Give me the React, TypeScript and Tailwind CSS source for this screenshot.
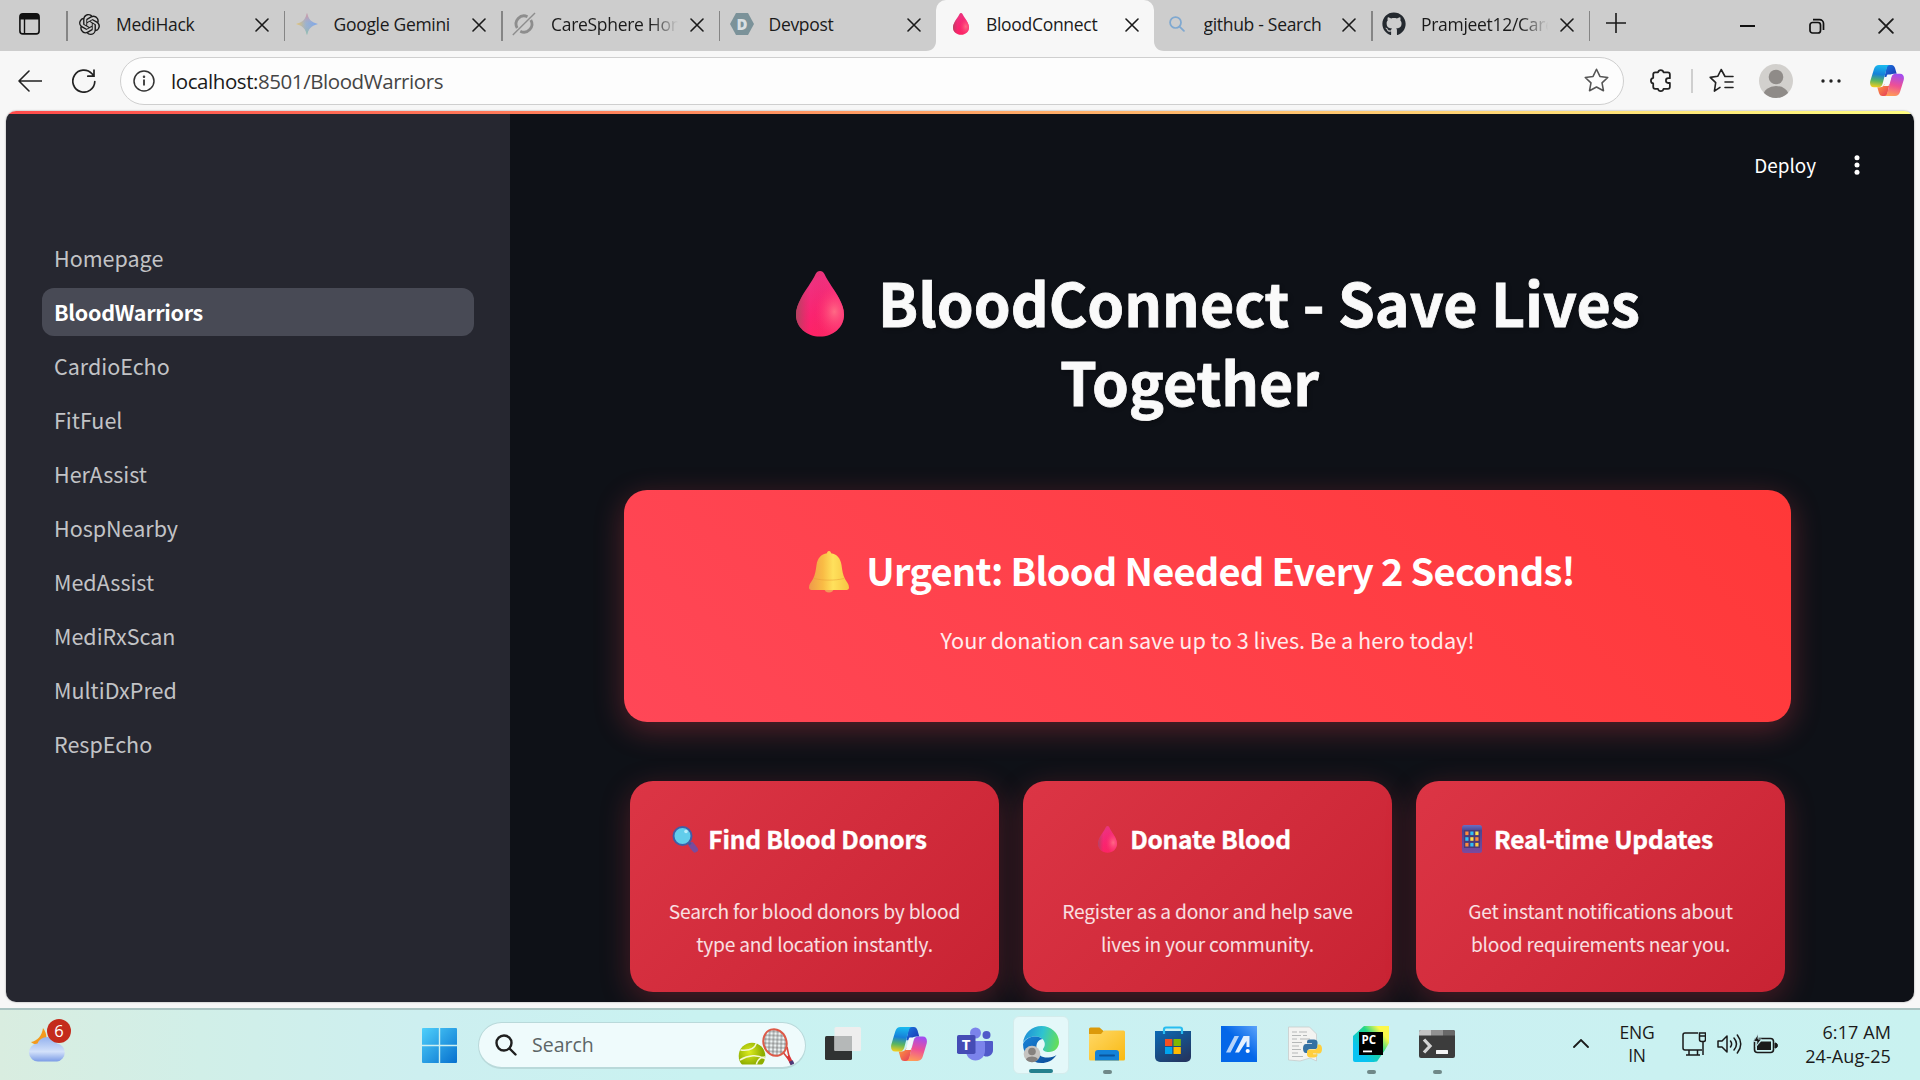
import React from 'react';
import { FaGithub } from 'react-icons/fa';
import { SiOpenai } from 'react-icons/si';

const UI_FONT = "font-['Open_Sans','Noto_Sans',sans-serif]";
const APP_FONT = "font-['Noto_Sans_CJK_SC','Noto_Sans',sans-serif]";

const DropIcon = ({ className = '' }: { className?: string }) => (
  <svg viewBox="0 0 48 68" className={className} preserveAspectRatio="none">
    <defs>
      <linearGradient id="dropBase" x1="0" y1="0" x2="0.6" y2="1">
        <stop offset="0" stopColor="#c7475f" />
        <stop offset="0.3" stopColor="#f0307f" />
        <stop offset="0.65" stopColor="#fb2370" />
        <stop offset="1" stopColor="#ff2260" />
      </linearGradient>
      <radialGradient id="dropGlow" cx="0.8" cy="0.62" r="0.4">
        <stop offset="0" stopColor="#ff6a85" />
        <stop offset="1" stopColor="#ff3070" stopOpacity="0" />
      </radialGradient>
      <linearGradient id="dropEdge" x1="0" y1="0" x2="1" y2="0">
        <stop offset="0" stopColor="#a8485c" stopOpacity="0.9" />
        <stop offset="0.3" stopColor="#d03060" stopOpacity="0" />
        <stop offset="1" stopColor="#ff50a8" stopOpacity="0.35" />
      </linearGradient>
    </defs>
    {['dropBase', 'dropEdge', 'dropGlow'].map((id) => (
      <path
        key={id}
        fill={`url(#${id})`}
        d="M24 0c2 0 3.400 1 4.400 3C32 11 39 20 43 28c3 6 5 11 5 17 0 13-11 22.500-24 22.500S0 58 0 45c0-6 2-11 5-17C9 20 16 11 19.600 3c1-2 2.400-3 4.400-3z"
      />
    ))}
  </svg>
);

const BellIcon = () => (
  <svg viewBox="0 0 40 42" className="h-[42px] w-10">
    <defs>
      <linearGradient id="bell" x1="0" y1="0" x2="1" y2="0">
        <stop offset="0" stopColor="#ee9a4a" />
        <stop offset="0.35" stopColor="#f9bc45" />
        <stop offset="0.6" stopColor="#ffe15c" />
        <stop offset="1" stopColor="#f7c443" />
      </linearGradient>
    </defs>
    <path d="M15 37h10c-.4 3-2.500 4.600-5 4.600S15.400 40 15 37z" fill="#f29a58" />
    <path
      d="M20 0c1.300 0 2 1 2 2.300 6 .9 9.500 5 10.500 11.700.8 5.500 1.300 9.500 3.500 14 1.500 3 4 5 4 8.500 0 1.600-.8 2.500-2.500 2.500h-35C.8 39 0 38.100 0 36.500 0 33 2.500 31 4 28c2.200-4.500 2.700-8.500 3.500-14C8.500 7.300 12 3.200 18 2.300 18 1 18.700 0 20 0z"
      fill="url(#bell)"
    />
    <path d="M5 27.500c9 2.200 21 2.200 30 0" fill="none" stroke="#e79a35" strokeWidth="1" opacity="0.5" />
  </svg>
);

const MagnifierIcon = () => (
  <svg viewBox="0 0 27 28" className="h-7 w-[27px]">
    <path d="M19.500 20l3.500 4.500" stroke="#7a4b9c" strokeWidth="6" strokeLinecap="round" />
    <path d="M15.500 16.500l3 3" stroke="#455a9b" strokeWidth="3" />
    <circle cx="10.500" cy="11" r="9" fill="#62cdeb" stroke="#3f5fa8" strokeWidth="2" />
    <circle cx="14" cy="6.500" r="1.800" fill="#b9ecfa" />
  </svg>
);

const PhoneIcon = () => {
  const dots = ['#ff8a3c', '#31c0f5', '#ffe14d', '#31c0f5', '#ffe14d', '#ff8a3c', '#ff8a3c', '#31c0f5', '#ffc83d'];
  return (
    <svg viewBox="0 0 20 28" className="h-7 w-5">
      <defs>
        <linearGradient id="phone" x1="0" y1="0" x2="0" y2="1">
          <stop offset="0" stopColor="#6a6fc4" />
          <stop offset="0.2" stopColor="#4b4690" />
          <stop offset="1" stopColor="#7a4a9e" />
        </linearGradient>
      </defs>
      <rect width="20" height="28" rx="2.500" fill="url(#phone)" />
      <rect x="2" y="5" width="16" height="18" fill="#4b3a78" />
      {dots.map((c, i) => (
        <rect key={i} x={3.300 + (i % 3) * 5} y={6.500 + Math.floor(i / 3) * 5.700} width="3.200" height="3.600" fill={c} />
      ))}
    </svg>
  );
};

const CopilotIcon = ({ className = '' }: { className?: string }) => (
  <svg viewBox="0 0 34 31" className={className} preserveAspectRatio="none">
    <defs>
      <linearGradient id="cpLeft" x1="0.3" y1="0" x2="0.2" y2="1">
        <stop offset="0" stopColor="#1ab8ee" />
        <stop offset="0.4" stopColor="#1680d8" />
        <stop offset="0.7" stopColor="#5bb560" />
        <stop offset="1" stopColor="#f8cf1b" />
      </linearGradient>
      <linearGradient id="cpRight" x1="0.5" y1="0" x2="0.3" y2="1">
        <stop offset="0" stopColor="#a44dee" />
        <stop offset="0.5" stopColor="#ee5095" />
        <stop offset="1" stopColor="#ff9e55" />
      </linearGradient>
      <linearGradient id="cpFold" x1="0" y1="0" x2="1" y2="1">
        <stop offset="0" stopColor="#1b78e0" />
        <stop offset="1" stopColor="#1b32b0" />
      </linearGradient>
      <linearGradient id="cpFoldLow" x1="0" y1="0" x2="1" y2="1">
        <stop offset="0" stopColor="#ffa03c" />
        <stop offset="1" stopColor="#e5345c" />
      </linearGradient>
    </defs>
    <path d="M17 0h4.500c2 0 3 1.300 3.600 3.300L26.700 8.700H24c-2.500 0-3.700 1-4.500 3.300h-5z" fill="url(#cpFold)" />
    <path d="M17 31h-4.500c-2 0-3-1.300-3.600-3.300l-1.600-5.400H10c2.500 0 3.700-1 4.500-3.300h5z" fill="url(#cpFoldLow)" />
    <path d="M9 0h11c-2 0-2.800 1.500-3.500 4L12.500 19c-.7 2.200-2 3.300-4.300 3.300H4C.8 22.300-.5 19.500.3 16L4 4C4.900 1.300 6.500 0 9 0z" fill="url(#cpLeft)" />
    <path d="M25 31H14c2 0 2.800-1.500 3.500-4l4-15c.7-2.200 2-3.300 4.300-3.300H30c3.200 0 4.500 2.800 3.700 6.300L30 27c-.9 2.700-2.500 4-5 4z" fill="url(#cpRight)" />
    <path d="M17.500 9.500h4.700c-.6.700-.9 1.500-1.200 2.500l-2.400 9h-4.800c.4-.5.600-1.200.8-2l1.900-7.500c.2-.8.500-1.400 1-2z" fill="#f4f8fb" />
  </svg>
);

const GeminiIcon = () => (
  <svg viewBox="0 0 22 22" className="size-[22px]">
    <defs>
      <linearGradient id="gem" x1="0" y1="0.5" x2="1" y2="0.5">
        <stop offset="0" stopColor="#ecc56a" />
        <stop offset="0.45" stopColor="#9bb3cf" />
        <stop offset="1" stopColor="#7aa5ec" />
      </linearGradient>
      <linearGradient id="gemV" x1="0" y1="0" x2="0" y2="1">
        <stop offset="0" stopColor="#e88f90" />
        <stop offset="0.5" stopColor="#b0a8c8" stopOpacity="0" />
        <stop offset="1" stopColor="#88c59c" />
      </linearGradient>
    </defs>
    <path d="M11 0c1.500 6.500 4.500 9.500 11 11-6.500 1.500-9.500 4.500-11 11-1.500-6.500-4.500-9.500-11-11 6.500-1.500 9.500-4.500 11-11z" fill="url(#gem)" />
    <path d="M11 0c1.500 6.500 4.500 9.500 11 11-6.500 1.500-9.500 4.500-11 11-1.500-6.500-4.500-9.500-11-11 6.500-1.500 9.500-4.500 11-11z" fill="url(#gemV)" />
  </svg>
);

const OrbitIcon = () => (
  <svg viewBox="0 0 24 24" className="size-6" fill="none" stroke="#8d8d8d">
    <path d="M15.500 4.700A8 8 0 0 0 5.200 16M8.300 19.200A8 8 0 0 0 18.800 8" strokeWidth="2.800" />
    <path d="M.8 23L23 1" strokeWidth="1.400" />
  </svg>
);

const DevpostIcon = () => (
  <svg viewBox="0 0 24 22" className="h-[22px] w-6">
    <path d="M6 0h12l6 11-6 11H6L0 11z" fill="#7b9299" />
    <text x="12" y="16.500" textAnchor="middle" fontFamily="Open Sans" fontWeight="800" fontSize="15" fill="#d9dfe1">
      D
    </text>
  </svg>
);

const SearchGlyph = ({ color, className }: { color: string; className: string }) => (
  <svg viewBox="0 0 22 22" className={className} fill="none" stroke={color} strokeWidth="2.400" strokeLinecap="round">
    <circle cx="9" cy="9" r="7.500" />
    <path d="M14.500 14.500l6 6" />
  </svg>
);

const CloseGlyph = ({ className = 'size-[14px]' }: { className?: string }) => (
  <svg viewBox="0 0 14 14" className={className} stroke="#1a1a1a" strokeWidth="1.600" strokeLinecap="round">
    <path d="M1 1l12 12M13 1L1 13" />
  </svg>
);

const tabs = [
  { title: 'MediHack', icon: <SiOpenai className="size-[21px] text-[#1b1b1b]" />, sep: true },
  { title: 'Google Gemini', icon: <GeminiIcon />, sep: true },
  { title: 'CareSphere Homepage', icon: <OrbitIcon />, sep: true, faded: true },
  { title: 'Devpost', icon: <DevpostIcon />, sep: true },
  { title: 'BloodConnect', icon: <DropIcon className="ml-1 h-[22px] w-4" />, active: true },
  { title: 'github - Search', icon: <SearchGlyph color="#7fa8d0" className="size-4" /> },
  { title: 'Pramjeet12/CareSphere', icon: <FaGithub className="size-6 text-[#24292f]" />, sep: true, faded: true },
];

const navItems = [
  'Homepage',
  'BloodWarriors',
  'CardioEcho',
  'FitFuel',
  'HerAssist',
  'HospNearby',
  'MedAssist',
  'MediRxScan',
  'MultiDxPred',
  'RespEcho',
];

const cards = [
  {
    title: 'Find Blood Donors',
    icon: <MagnifierIcon />,
    lines: ['Search for blood donors by blood', 'type and location instantly.'],
  },
  {
    title: 'Donate Blood',
    icon: <DropIcon className="h-[27px] w-[19px]" />,
    lines: ['Register as a donor and help save', 'lives in your community.'],
  },
  {
    title: 'Real-time Updates',
    icon: <PhoneIcon />,
    lines: ['Get instant notifications about', 'blood requirements near you.'],
  },
];

const TabStrip = () => (
  <div className="flex h-[51px] shrink-0 bg-[#cdcdcd]">
    <div className="flex w-[66px] items-center pb-1 pl-[19px]">
      <svg viewBox="0 0 21 22" className="h-[22px] w-[21px]">
        <rect x="0.900" y="0.900" width="19.200" height="20" rx="3" fill="none" stroke="#111" strokeWidth="1.600" />
        <path d="M1 6.500V4a3 3 0 0 1 3-3h13a3 3 0 0 1 3 3v2.500z" fill="#111" />
        <path d="M5.500 6v15" stroke="#111" strokeWidth="1.400" />
      </svg>
    </div>
    {tabs.map((tab) => (
      <div
        key={tab.title}
        className={`relative flex w-[217.5px] shrink-0 items-center pb-[3px] ${
          tab.active ? 'rounded-t-[10px] bg-[#f7f7f7]' : ''
        }`}
      >
        {tab.sep && <span className="absolute left-0 top-[11px] h-[30px] w-[1.500px] bg-[#858585]" />}
        {tab.active && (
          <>
            <svg viewBox="0 0 10 10" className="absolute -left-2.5 bottom-0 size-2.5">
              <path d="M10 0v10H0c6 0 10-4 10-10z" fill="#f7f7f7" />
            </svg>
            <svg viewBox="0 0 10 10" className="absolute -right-2.5 bottom-0 size-2.5">
              <path d="M0 0v10h10C4 10 0 6 0 0z" fill="#f7f7f7" />
            </svg>
          </>
        )}
        <span className="ml-[11px] flex w-6 justify-center">{tab.icon}</span>
        <span
          className={`ml-[15px] w-[127px] overflow-hidden whitespace-nowrap text-[17.500px] leading-6 tracking-[-0.3px] text-[#1a1a1a] ${
            tab.faded ? '[mask-image:linear-gradient(to_right,black_78%,transparent)]' : ''
          }`}
        >
          {tab.title}
        </span>
        <span className="ml-[11.500px] pt-px">
          <CloseGlyph />
        </span>
      </div>
    ))}
    <div className="flex flex-1 items-center">
      <span className="h-[30px] w-[1.500px] bg-[#858585]" />
      <svg viewBox="0 0 22 22" className="mb-[5px] ml-[15px] size-[22px]" stroke="#1a1a1a" strokeWidth="1.600">
        <path d="M11 1v20M1 11h20" />
      </svg>
      <svg viewBox="0 0 15 2" className="ml-[113px] h-0.5 w-[15px]">
        <path d="M0 1h15" stroke="#111" strokeWidth="2" />
      </svg>
      <svg viewBox="0 0 16 16" className="ml-[54px] size-4" fill="none" stroke="#111" strokeWidth="1.700">
        <rect x="1" y="4.500" width="10.500" height="10.500" rx="2.500" />
        <path d="M4 1.600h6.500a4 4 0 0 1 4 4V12" />
      </svg>
      <CloseGlyph className="ml-[53px] size-4" />
    </div>
  </div>
);

const Toolbar = () => (
  <div className="flex h-[60px] shrink-0 items-center pb-px">
    <svg viewBox="0 0 24 22" className="ml-[18px] h-[22px] w-6" fill="none" stroke="#222" strokeWidth="1.600" strokeLinecap="round" strokeLinejoin="round">
      <path d="M23.500 11H1M11 1L1 11l10 10" />
    </svg>
    <svg viewBox="0 0 24 24" className="ml-[30px] size-6" fill="none" stroke="#222" strokeWidth="1.700" strokeLinecap="round">
      <path d="M22.800 12.500A11 11 0 1 1 20 4.800l1.500 1.700M22 1v6.200h-6.200" />
    </svg>
    <div className="ml-6 flex h-12 w-[1504px] items-center rounded-full border-[1.500px] border-[#cfcfcf] bg-[#fdfdfd]">
      <svg viewBox="0 0 22 22" className="ml-[12px] size-[22px]" fill="none" stroke="#333" strokeWidth="1.500">
        <circle cx="11" cy="11" r="10" />
        <path d="M11 9.500v6" strokeWidth="1.800" />
        <circle cx="11" cy="6.700" r="0.500" />
      </svg>
      <span className="ml-4 whitespace-nowrap text-[20.500px] leading-7 tracking-[-0.43px] text-[#454545]">
        <span className="text-[#1a1a1a]">localhost:</span>8501/BloodWarriors
      </span>
      <svg viewBox="0 0 24 24" className="ml-auto mr-[14px] size-[25px]" fill="none" stroke="#555" strokeWidth="1.500" strokeLinejoin="round">
        <path d="M12 1.200l3.300 6.900 7.500 1-5.500 5.200 1.400 7.500L12 18.200l-6.700 3.600 1.400-7.500L1.200 9.100l7.500-1z" />
      </svg>
    </div>
    <svg viewBox="0 0 24 24" className="ml-[24px] size-[25px]" fill="none" stroke="#222" strokeWidth="1.700" strokeLinejoin="round">
      <path d="M9.600 4.200a2.700 2.700 0 0 1 5.300 0H19a2 2 0 0 1 2 2v3.600h-1.500a2.300 2.300 0 0 0 0 4.600H21V18a2 2 0 0 1-2 2h-4.100a2.700 2.700 0 0 1-5.300 0H7a2 2 0 0 1-2-2v-3.200a2.700 2.700 0 0 1 0-5.300V6.200a2 2 0 0 1 2-2z" />
    </svg>
    <span className="ml-[18px] h-6 w-[1.500px] bg-[#cfcfcf]" />
    <svg viewBox="0 0 25 25" className="ml-4 size-[25px]" fill="none" stroke="#222" strokeWidth="1.600" strokeLinecap="round" strokeLinejoin="round">
      <path d="M16 8.500L12.200 1.500 8.700 8.300l-7.500 1.100 5.500 5.300-1.300 8.500 5.600-3.800M16 8.500h8M16 14h8M16 19.500h8" />
    </svg>
    <svg viewBox="0 0 34 34" className="ml-[25px] size-[34px]">
      <defs>
        <clipPath id="avatar"><circle cx="17" cy="17" r="17" /></clipPath>
      </defs>
      <g clipPath="url(#avatar)">
        <rect width="34" height="34" fill="#d2d0cd" />
        <circle cx="17" cy="13" r="7.300" fill="#8f8b88" />
        <ellipse cx="17" cy="31" rx="12.500" ry="9" fill="#8f8b88" />
      </g>
    </svg>
    <svg viewBox="0 0 20 4" className="ml-[28px] h-1 w-5" fill="#222">
      <circle cx="2" cy="2" r="1.700" />
      <circle cx="10" cy="2" r="1.700" />
      <circle cx="18" cy="2" r="1.700" />
    </svg>
    <CopilotIcon className="ml-[29px] h-[31px] w-[34px]" />
  </div>
);

const Sidebar = () => (
  <aside className="w-[504px] shrink-0 bg-[#262730] px-9 pt-[120px]">
    <nav>
      <ul className="space-y-1.5">
        {navItems.map((item) => (
          <li
            key={item}
            className={`flex h-12 items-center rounded-xl px-3 text-[21.500px] ${
              item === 'BloodWarriors' ? 'bg-[#484a55] font-bold tracking-[-0.3px] text-white' : 'text-[#c2c3c6]'
            }`}
          >
            {item}
          </li>
        ))}
      </ul>
    </nav>
  </aside>
);

const MainContent = () => (
  <main className="relative flex-1 overflow-hidden bg-[#0e1117] pl-[114px] text-[#fafafa]">
    <div className="absolute right-[54px] top-[35px] flex h-8 items-center gap-[38px]">
      <span className="text-[18.900px] text-white">Deploy</span>
      <svg viewBox="0 0 6 20" className="h-5 w-1.5" fill="#fff">
        <circle cx="3" cy="2.700" r="2.500" />
        <circle cx="3" cy="10" r="2.500" />
        <circle cx="3" cy="17.300" r="2.500" />
      </svg>
    </div>

    <div className="w-[1167px]">
      <h1 className="pt-[148px] text-[59px] font-bold leading-[79px] [-webkit-text-stroke:0.8px_#fafafa] [text-shadow:2px_2px_4px_rgba(0,0,0,0.3)]">
        <div className="flex items-start justify-center whitespace-nowrap pl-[21px]">
          <DropIcon className="mr-[34px] mt-[9px] h-[66px] w-12" />
          BloodConnect - Save Lives
        </div>
        <div className="pr-9 text-center">Together</div>
      </h1>

      <section className="mt-[70px] h-[232px] rounded-[23px] bg-[linear-gradient(45deg,#ff4757,#ff3838)] pt-[53px] shadow-[0_8px_30px_rgba(255,71,87,0.3)]">
        <h2 className="flex h-[54px] items-start justify-center whitespace-nowrap pr-[31px] text-[38px] font-bold leading-[54px] tracking-[-0.75px] text-white">
          <span className="mr-[17px] mt-2">
            <BellIcon />
          </span>
          Urgent: Blood Needed Every 2 Seconds!
        </h2>
        <p className="mt-[25px] text-center text-[21.700px] leading-9 text-white/90">
          Your donation can save up to 3 lives. Be a hero today!
        </p>
      </section>

      <section className="mt-[59px] flex gap-6 px-1.5">
        {cards.map((card) => (
          <div
            key={card.title}
            className="h-[211px] w-[369px] rounded-[23px] bg-[linear-gradient(135deg,#dc3545,#c82333)] pt-10 text-center shadow-[0_8px_30px_rgba(220,53,69,0.3)]"
          >
            <h3 className="flex h-9 items-center justify-center whitespace-nowrap pr-[34px] text-[24.500px] font-bold leading-9 tracking-[-0.2px] text-white [-webkit-text-stroke:0.4px_#fff]">
              <span className="mr-[5px] flex w-[35px] justify-center">{card.icon}</span>
              {card.title}
            </h3>
            <p className="mt-[38px] whitespace-nowrap text-[19.200px] leading-[33px] tracking-[-0.2px] text-white/85">
              {card.lines[0]}
              <br />
              {card.lines[1]}
            </p>
          </div>
        ))}
      </section>
    </div>
  </main>
);

const WeatherIcon = () => (
  <svg viewBox="0 0 42 44" className="h-11 w-[42px]">
    <defs>
      <linearGradient id="cloud" x1="0" y1="0" x2="0" y2="1">
        <stop offset="0" stopColor="#93b1ee" />
        <stop offset="0.6" stopColor="#d3e1fa" />
        <stop offset="1" stopColor="#7b9ce6" />
      </linearGradient>
    </defs>
    <path d="M14 9c4 5 5 13 1 18-4-1-10-1-13-4 6-1 11-6 12-14z" fill="#f39a1e" />
    <path d="M9.500 42.500a9 9 0 0 1-1-18 10.500 10.500 0 0 1 19.500 0 9.100 9.100 0 0 1 0 18z" fill="url(#cloud)" />
    <circle cx="30" cy="12" r="12" fill="#c42b1c" />
    <text x="30" y="18" textAnchor="middle" fontSize="16.500" fill="#fff" fontFamily="Open Sans">6</text>
  </svg>
);

const WindowsLogo = () => (
  <svg viewBox="0 0 35 35" className="size-[35px]">
    <defs>
      <linearGradient id="win" x1="0" y1="0" x2="1" y2="1">
        <stop offset="0" stopColor="#4fd0fb" />
        <stop offset="1" stopColor="#0670ce" />
      </linearGradient>
    </defs>
    <path d="M1 0h15.800v16.800H0V1a1 1 0 0 1 1-1zM18.200 0H34a1 1 0 0 1 1 1v15.800H18.200zM0 18.200h16.800V35H1a1 1 0 0 1-1-1zM18.200 18.200H35V34a1 1 0 0 1-1 1H18.200z" fill="url(#win)" />
  </svg>
);

const TennisIcon = () => (
  <svg viewBox="0 0 56 38" className="h-[38px] w-14">
    <defs>
      <radialGradient id="ball" cx="0.4" cy="0.35">
        <stop offset="0" stopColor="#dcec1f" />
        <stop offset="1" stopColor="#8fae00" />
      </radialGradient>
      <clipPath id="ballClip"><rect width="56" height="36.500" /></clipPath>
      <pattern id="strings" width="4" height="4" patternUnits="userSpaceOnUse" patternTransform="rotate(20)">
        <path d="M0 2h4M2 0v4" stroke="#5d5d5d" strokeWidth="0.700" />
      </pattern>
    </defs>
    <path d="M44 23l8 10M49 19l3 14" stroke="#d8443d" strokeWidth="1.600" fill="none" />
    <path d="M50 28l4 8" stroke="#d9373a" strokeWidth="3.500" />
    <path d="M53 33l1.500 3.500" stroke="#4b3a78" strokeWidth="4" />
    <ellipse cx="37" cy="14.500" rx="11.500" ry="13.500" transform="rotate(-18 37 14.500)" fill="#eef4f4" />
    <ellipse cx="37" cy="14.500" rx="11.500" ry="13.500" transform="rotate(-18 37 14.500)" fill="url(#strings)" stroke="#dd5a48" strokeWidth="2" />
    <g clipPath="url(#ballClip)">
      <circle cx="14" cy="28" r="13.300" fill="url(#ball)" />
      <path d="M2.500 22c8 1 14-1 16-7M2 32c8-5 18-6 25-1M19 40c-2-5 2-11 8-11" fill="none" stroke="#f4f8d2" strokeWidth="1.500" />
    </g>
  </svg>
);

const TaskViewIcon = () => (
  <svg viewBox="0 0 36 36" className="size-9">
    <rect x="0" y="10" width="27" height="24" rx="1.500" fill="#303232" />
    <rect x="9.500" y="1" width="26.500" height="24" rx="1.500" fill="#eeeeee" />
    <rect x="9.500" y="10" width="17.500" height="15" fill="#b5b8b8" />
  </svg>
);

const TeamsIcon = () => (
  <svg viewBox="0 0 36 34" className="h-[34px] w-9">
    <circle cx="29.500" cy="8" r="4" fill="#5059c9" />
    <path d="M24 14h11a1 1 0 0 1 1 1v8c0 4-3 6.500-6.500 6.500S24 27 24 23z" fill="#5059c9" />
    <circle cx="18.500" cy="6" r="5.500" fill="#7b83eb" />
    <path d="M10 14h16.500a1.500 1.500 0 0 1 1.500 1.500V24c0 5-4 9.500-9.500 9.500S9 29 9 24v-9z" fill="#7b83eb" />
    <rect x="0" y="8" width="18.500" height="19" rx="1.800" fill="#454cb5" />
    <text x="9.200" y="23" textAnchor="middle" fontFamily="Open Sans" fontWeight="700" fontSize="15" fill="#fff">T</text>
  </svg>
);

const EdgeIcon = () => (
  <svg viewBox="0 0 36 37" className="h-[37px] w-9">
    <defs>
      <linearGradient id="edgeTop" x1="0" y1="0.4" x2="1" y2="0.6">
        <stop offset="0" stopColor="#1f8fd8" />
        <stop offset="0.5" stopColor="#2fc3d0" />
        <stop offset="1" stopColor="#66df55" />
      </linearGradient>
      <linearGradient id="edgeLow" x1="0" y1="0" x2="1" y2="1">
        <stop offset="0" stopColor="#1783d8" />
        <stop offset="1" stopColor="#0c4a96" />
      </linearGradient>
    </defs>
    <path d="M0 17C1 7 9 0 18.500 0 28 0 36 7 36 16c0 6-4.500 10-10 10-4 0-6.500-1.500-6-3 .7-1.500 1.800-2.500 1.800-5 0-4-3.800-7.500-9.300-7.500C6.500 10.500 2 13 0 17z" fill="url(#edgeTop)" />
    <path d="M0 18c2-5 7-7.500 12.500-7.500 3 0 5.500 1 7 2.500-5 1-6.500 5-6 9.500 1 7 6 9.500 12 9 3-.2 6-1 8-2.500C29.500 35 24 37 18.500 37 8 37 0 29 0 18z" fill="url(#edgeLow)" />
    <circle cx="9" cy="28" r="8.300" fill="#c5c3c0" />
    <circle cx="9" cy="25.500" r="3.800" fill="#85817e" />
    <path d="M3 33.500c1-4 11-4 12 0-3 3.500-9 3.500-12 0z" fill="#85817e" />
  </svg>
);

const ExplorerIcon = () => (
  <svg viewBox="0 0 36 34" className="h-[34px] w-9">
    <defs>
      <linearGradient id="folder" x1="0" y1="0" x2="1" y2="1">
        <stop offset="0" stopColor="#ffd867" />
        <stop offset="1" stopColor="#f9b912" />
      </linearGradient>
    </defs>
    <path d="M0 2a1.500 1.500 0 0 1 1.500-1.500h9L14.500 4H35v6H0z" fill="#dc9a0a" />
    <path d="M0 7h12l3-3.500h19.500A1.500 1.500 0 0 1 36 5v27a1.500 1.500 0 0 1-1.500 1.500h-33A1.500 1.500 0 0 1 0 32z" fill="url(#folder)" />
    <path d="M6 33.500V26a3 3 0 0 1 3-3h18a3 3 0 0 1 3 3v7.500z" fill="#1382d8" />
    <path d="M11 28.500h14" stroke="#0a549c" strokeWidth="2" strokeLinecap="round" />
  </svg>
);

const StoreIcon = () => (
  <svg viewBox="0 0 36 36" className="size-9">
    <defs>
      <linearGradient id="store" x1="0" y1="0" x2="0.7" y2="1">
        <stop offset="0" stopColor="#0a6ab5" />
        <stop offset="1" stopColor="#233762" />
      </linearGradient>
    </defs>
    <path d="M9 8V3.500A2 2 0 0 1 11 1.500h14a2 2 0 0 1 2 2V8" fill="none" stroke="#29bdf0" strokeWidth="2.200" />
    <path d="M0 5h36v26a5 5 0 0 1-5 5H5a5 5 0 0 1-5-5z" fill="url(#store)" />
    <path d="M9 8V5M27 8V5" stroke="#29bdf0" strokeWidth="2.200" />
    <rect x="10" y="13" width="7.300" height="7" fill="#f25022" />
    <rect x="18.500" y="13" width="7.300" height="7" fill="#7fba00" />
    <rect x="10" y="21" width="7.300" height="7" fill="#00a4ef" />
    <rect x="18.500" y="21" width="7.300" height="7" fill="#ffb900" />
  </svg>
);

const AsusIcon = () => (
  <svg viewBox="0 0 36 36" className="size-9">
    <defs>
      <linearGradient id="asus" x1="0.2" y1="0.8" x2="1" y2="0">
        <stop offset="0.4" stopColor="#0467e8" />
        <stop offset="1" stopColor="#5da3fa" />
      </linearGradient>
    </defs>
    <rect width="36" height="36" fill="url(#asus)" />
    <path d="M5 26.500L13.500 10H18L9.500 26.500z" fill="#b4d3fb" />
    <path d="M14 26.500L22.500 10h6v11h-3v-6l-7.500 11.500z" fill="#e4f0ff" />
    <circle cx="26.700" cy="25" r="2.100" fill="#fff" />
  </svg>
);

const PythonFileIcon = () => (
  <svg viewBox="0 0 34 36" className="h-9 w-[34px]">
    <path d="M.5 1h21l7 7v27L22 32l-10 3-11.500-1z" fill="#f3f3f1" stroke="#c8cccc" strokeWidth="0.800" />
    <path d="M4 6h5M11 6h8M4 9.500h9M15 9.500h4M4 13h5M12 13h10M4 16.500h10M4 20h7M4 23.500h9M4 27h6M4 30.500h11" stroke="#b5b8b8" strokeWidth="1.200" />
    <path d="M22 13.500h4c2 0 3.500 1 3.500 3v4c0 2-1.500 2.500-3 2.500h-4c-2 0-3 1.200-3 3v1h-1.500c-2 0-3-2-3-4.500s1-4.500 3-4.500H24v-.8h-5v-1.200c0-1.700 1-2.500 3-2.500z" fill="#3571a3" />
    <path d="M26 31.500h-3.500c-2 0-3.500-1-3.500-3V26c0-1.700 1-2.500 3-2.500h4.500c2 0 3-1.200 3-3v-2H31c2 0 3 2 3 4.500s-1 4.500-3 4.500h-6v.8h4.500v.8c0 1.700-1.500 2.400-3.500 2.400z" fill="#ffcf3d" />
  </svg>
);

const PycharmIcon = () => (
  <svg viewBox="0 0 36 36" className="size-9">
    <defs>
      <linearGradient id="pyc" x1="0" y1="0.9" x2="1" y2="0.1">
        <stop offset="0.2" stopColor="#07c3f2" />
        <stop offset="0.6" stopColor="#21d789" />
        <stop offset="0.85" stopColor="#fcf84a" />
      </linearGradient>
    </defs>
    <path d="M11 0h25v17l-4 7-8 11.500-3.500.5H2a2 2 0 0 1-2-2V10z" fill="url(#pyc)" />
    <rect x="6" y="6" width="24" height="23" fill="#000" />
    <text x="8.500" y="17.500" fontFamily="Open Sans" fontWeight="700" fontSize="11.500" fill="#fff">PC</text>
    <rect x="10" y="24.500" width="9" height="1.800" fill="#fff" />
  </svg>
);

const TerminalIcon = () => (
  <svg viewBox="0 0 36 28" className="h-7 w-9">
    <rect width="36" height="28" rx="2" fill="#3c3c3c" />
    <path d="M2 0h10v5.500H0V2a2 2 0 0 1 2-2z" fill="#c4c4c4" />
    <path d="M12 0h12v5.500H12z" fill="#929292" />
    <path d="M24 0h10a2 2 0 0 1 2 2v3.500H24z" fill="#686868" />
    <path d="M5 9.500l6 6.500-6 6.500" fill="none" stroke="#d4d4d4" strokeWidth="3.300" />
    <rect x="17" y="20" width="12" height="4" rx="0.500" fill="#f4f4f4" />
  </svg>
);

const apps = [
  { name: 'taskview', icon: <TaskViewIcon /> },
  { name: 'copilot', icon: <CopilotIcon className="h-[34px] w-9" /> },
  { name: 'teams', icon: <TeamsIcon /> },
  { name: 'edge', icon: <EdgeIcon />, active: true },
  { name: 'explorer', icon: <ExplorerIcon />, running: true },
  { name: 'store', icon: <StoreIcon /> },
  { name: 'asus', icon: <AsusIcon /> },
  { name: 'python', icon: <PythonFileIcon /> },
  { name: 'pycharm', icon: <PycharmIcon />, running: true },
  { name: 'terminal', icon: <TerminalIcon />, running: true },
];

const Taskbar = () => (
  <footer className="flex h-[72px] shrink-0 items-center border-t-2 border-[#a9c3c1] bg-[linear-gradient(to_right,#d9ede0_0,#d1efe8_200px,#cdeff0_420px,#c9f2f1_700px,#cbf0f2_1400px,#c9f2f0)]">
    <div className="flex w-[422px] items-center pb-[9px] pl-[29px]">
      <WeatherIcon />
    </div>
    <WindowsLogo />
    <div className="ml-[21px] flex h-[47px] w-[328px] items-center rounded-full border border-b-2 border-[#b9d9da] bg-[#effbfc]">
      <SearchGlyph color="#1f1f1f" className="ml-4 size-[22px]" />
      <span className="ml-[15px] text-[19.500px] text-[#5c6566]">Search</span>
      <span className="ml-auto mr-[11px] pt-1">
        <TennisIcon />
      </span>
    </div>
    <div className="ml-[9px] flex gap-2.5">
      {apps.map((app) => (
        <div
          key={app.name}
          className={`relative flex h-[58px] w-14 items-center justify-center rounded-md pb-0.5 ${
            app.active ? 'border border-[#d3ecec] bg-[#e4f8f9]' : ''
          }`}
        >
          {app.icon}
          {app.active && <span className="absolute bottom-0 h-1 w-6 rounded-full bg-[#24808e]" />}
          {app.running && <span className="absolute bottom-0 h-1 w-[9px] rounded-full bg-[#6f8888]" />}
        </div>
      ))}
    </div>
    <svg viewBox="0 0 16 9" className="ml-[108px] h-[9px] w-4 -translate-y-0.5" fill="none" stroke="#1a1a1a" strokeWidth="1.800" strokeLinecap="round">
      <path d="M1 8l7-7 7 7" />
    </svg>
    <div className="ml-[28px] w-10 whitespace-nowrap pb-0.5 text-center text-[17.500px] leading-[23px] tracking-[-0.2px] text-[#1a1a1a]">
      ENG
      <br />
      IN
    </div>
    <div className="ml-[25px] flex items-center gap-[11px] pb-[3px] text-[#1a1a1a]">
      <svg viewBox="0 0 24 24" className="size-6" fill="none" stroke="currentColor" strokeWidth="1.500">
        <path d="M16 1H3a2 2 0 0 0-2 2v13a2 2 0 0 0 2 2h17M7 18v5M15.500 18v5M4 23h14M21 10v13" />
        <path d="M17.500 1h6v6.500a2 2 0 0 1-2 2h-2a2 2 0 0 1-2-2zM17.500 4h6" />
      </svg>
      <svg viewBox="0 0 25 22" className="h-[22px] w-[25px]" fill="none" stroke="currentColor" strokeWidth="1.500" strokeLinejoin="round" strokeLinecap="round">
        <path d="M1 8v6h4l5 5V3L5 8zM13.500 8c1.500 2 1.500 4 0 6M17 5c3.300 4 3.300 8 0 12M20.300 2c4.600 6 4.600 12 0 18" />
      </svg>
      <svg viewBox="0 0 25 20" className="h-5 w-[25px]">
        <rect x="1.500" y="4.500" width="19" height="14" rx="3" fill="none" stroke="#1a1a1a" strokeWidth="1.600" />
        <path d="M8 7.500h10v8.500H4v-4z" fill="#1a1a1a" />
        <path d="M22 9v5c1.500 0 2.500-1 2.500-2.500S23.500 9 22 9z" fill="#1a1a1a" stroke="#1a1a1a" />
        <path d="M5 0L.5 7.500H4L3 12.500 8.500 5H5z" fill="#1a1a1a" stroke="#cbf0f2" strokeWidth="0.800" />
      </svg>
    </div>
    <div className="ml-auto mr-[29px] whitespace-nowrap pb-0.5 text-right text-[18px] leading-6 tracking-[0.1px] text-[#1a1a1a]">
      6:17 AM
      <br />
      24-Aug-25
    </div>
  </footer>
);

const App = () => (
  <div className={`flex h-[1080px] w-[1920px] flex-col overflow-hidden bg-[#f7f7f7] ${UI_FONT}`}>
    <TabStrip />
    <Toolbar />
    <div className={`mx-1.5 mb-1.5 flex min-h-0 flex-1 flex-col overflow-hidden rounded-[10px] shadow-[0_0_2px_rgba(0,0,0,0.4)] ${APP_FONT}`}>
      <div className="h-[3px] shrink-0 bg-[linear-gradient(to_right,#ff4b4b,#fffd80)]" />
      <div className="flex min-h-0 flex-1">
        <Sidebar />
        <MainContent />
      </div>
    </div>
    <Taskbar />
  </div>
);

export default App;
